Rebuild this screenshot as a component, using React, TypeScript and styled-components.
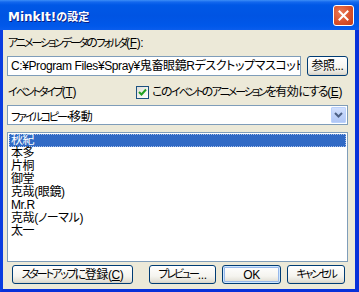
import React from "react";
import styled, { createGlobalStyle } from "styled-components";

const Global = createGlobalStyle`
  html, body { margin: 0; padding: 0; overflow: hidden; }
  body { font-family: "Liberation Sans", "Noto Sans CJK JP", sans-serif; }
`;

const Window = styled.div`
  width: 359px;
  height: 292px;
  display: flex;
  flex-direction: column;
  background: #0831d9;
`;

const TitleBar = styled.div`
  height: 30px;
  flex: none;
  display: flex;
  align-items: center;
  justify-content: space-between;
  padding: 0 5px 0 8px;
  background: linear-gradient(
    to bottom,
    #3d8ef7 0px,
    #1468ee 2px,
    #0058e6 5px,
    #0054e3 16px,
    #0058ea 26px,
    #0a5ded 30px
  );
`;

const Title = styled.span`
  font-family: "DejaVu Sans", "Noto Sans CJK JP", sans-serif;
  font-weight: bold;
  font-size: 12px;
  color: #fff;
  text-shadow: 1px 1px 0 #0a1e84;
  margin-top: 1px;
`;

const TitleJa = styled.span`
  font-family: "Noto Sans CJK JP", sans-serif;
  font-size: 11px;
`;

const CloseButton = styled.div`
  width: 19px;
  height: 19px;
  border: 1px solid #fff;
  border-radius: 3px;
  background: radial-gradient(circle at 35% 35%, #ea7a57 0%, #d9512c 55%, #c23b17 100%);
  display: flex;
  align-items: center;
  justify-content: center;
`;

const Frame = styled.div`
  flex: 1;
  display: flex;
  border-left: 3px solid #0a3ce0;
  border-right: 4px solid #0831d9;
  border-bottom: 3px solid #0831d9;
  min-height: 0;
`;

const Client = styled.div`
  flex: 1;
  min-width: 0;
  background: #ece9d8;
  padding: 7px 7px 0 4px;
  display: flex;
  flex-direction: column;
  font-family: "Liberation Sans", "Noto Sans CJK JP", sans-serif;
  font-size: 12px;
  letter-spacing: -0.4px;
  font-feature-settings: "palt";
  color: #000;
`;

const Kana = styled.span`
  font-size: 11px;
  letter-spacing: -2.1px;
`;

const Hira = styled.span`
  letter-spacing: -1.5px;
`;

function J({ t }: { t: string }) {
  const parts = t.split(/([\u30A0-\u30FF]+|[\u3040-\u309F]+)/);
  return (
    <>
      {parts.map((p, i) => {
        if (!p) return null;
        if (/^[\u30A0-\u30FF]+$/.test(p)) return <Kana key={i}>{p}</Kana>;
        if (/^[\u3040-\u309F]+$/.test(p)) return <Hira key={i}>{p}</Hira>;
        return <React.Fragment key={i}>{p}</React.Fragment>;
      })}
    </>
  );
}

const Label = styled.div`
  height: 13px;
  line-height: 13px;
  padding-left: 1px;
  white-space: nowrap;
`;

const Row = styled.div<{ $mt: number; $h: number }>`
  display: flex;
  align-items: center;
  gap: 6px;
  margin-top: ${(p) => p.$mt}px;
  height: ${(p) => p.$h}px;
  flex: none;
`;

const TextBox = styled.div`
  flex: 1;
  min-width: 0;
  height: 100%;
  box-sizing: border-box;
  border: 1px solid #7f9db9;
  background: #fff;
  padding: 0 3px;
  line-height: 18px;
  white-space: nowrap;
  overflow: hidden;
`;

const Button = styled.div<{ $w: number; $default?: boolean }>`
  width: ${(p) => p.$w}px;
  height: 100%;
  flex: none;
  box-sizing: border-box;
  border: 1px solid #003c74;
  border-radius: 3px;
  background: linear-gradient(to bottom, #ffffff 0%, #f5f4ef 60%, #e3e0d6 90%, #d6d0c5 100%);
  box-shadow: ${(p) =>
    p.$default ? "inset 0 0 0 1px #cee7ff, inset 0 0 0 2px #98b8ea" : "none"};
  display: flex;
  align-items: center;
  justify-content: center;
  white-space: nowrap;
  line-height: 1;
`;

const EventLabel = styled.div`
  width: 122px;
  flex: none;
  padding-left: 1px;
  line-height: 13px;
  white-space: nowrap;
`;

const CheckGroup = styled.div`
  display: flex;
  align-items: center;
  gap: 3px;
`;

const CheckBox = styled.div`
  width: 13px;
  height: 13px;
  box-sizing: border-box;
  border: 1px solid #1c5180;
  background: linear-gradient(135deg, #dcdcd7 0%, #f4f4f0 60%, #ffffff 100%);
  display: flex;
  align-items: center;
  justify-content: center;
  flex: none;
`;

const CheckText = styled.span`
  line-height: 13px;
  white-space: nowrap;
`;

const Combo = styled.div`
  flex: 1;
  height: 100%;
  box-sizing: border-box;
  border: 1px solid #7f9db9;
  background: #fff;
  display: flex;
  align-items: center;
  padding: 1px;
`;

const ComboText = styled.span`
  flex: 1;
  padding-left: 2px;
  white-space: nowrap;
`;

const DropButton = styled.div`
  width: 15px;
  height: 16px;
  box-sizing: border-box;
  border: 1px solid #bad1fc;
  border-radius: 1px;
  background: linear-gradient(to bottom, #d2e0fd 0%, #bfd2f9 50%, #b0c6f5 100%);
  display: flex;
  align-items: center;
  justify-content: center;
  flex: none;
`;

const ListBox = styled.div`
  margin-top: 7px;
  height: 130px;
  flex: none;
  box-sizing: border-box;
  border: 1px solid #7f9db9;
  background: #fff;
  padding: 1px;
  display: flex;
  flex-direction: column;
`;

const Item = styled.div<{ $selected?: boolean }>`
  height: 13px;
  line-height: 13px;
  padding-left: 2px;
  box-sizing: border-box;
  white-space: nowrap;
  background: ${(p) => (p.$selected ? "#316ac5" : "transparent")};
  color: ${(p) => (p.$selected ? "#fff" : "#000")};
  outline: ${(p) => (p.$selected ? "1px dotted #a6bde6" : "none")};
  outline-offset: -1px;
`;

const ButtonRow = styled.div`
  display: flex;
  height: 19px;
  margin-top: 3px;
  padding-left: 5px;
  gap: 6px;
  flex: none;
`;

const Spacer = styled.div`
  width: 4px;
  flex: none;
`;

const Fill = styled.div`
  flex: 1;
`;

const items = ["秋紀", "本多", "片桐", "御堂", "克哉(眼鏡)", "Mr.R", "克哉(ノーマル)", "太一"];

export default function App() {
  return (
    <>
      <Global />
      <Window>
        <TitleBar>
          <Title>
            MinkIt!<TitleJa>の設定</TitleJa>
          </Title>
          <CloseButton>
            <svg width="11" height="11" viewBox="0 0 11 11">
              <path d="M1.5 1.5 L9.5 9.5 M9.5 1.5 L1.5 9.5" stroke="#fff" strokeWidth="2" strokeLinecap="square" />
            </svg>
          </CloseButton>
        </TitleBar>
        <Frame>
          <Client>
            <Label>
              <J t="アニメーションデータのフォルダ(" />
              <u>F</u>):
            </Label>
            <Row $mt={6} $h={20}>
              <TextBox>C:¥Program Files¥Spray¥鬼畜眼鏡Rデスクトップマスコット¥animation</TextBox>
              <Button $w={41}>参照...</Button>
            </Row>
            <Row $mt={10} $h={13}>
              <EventLabel>
                <J t="イベントタイプ(" />
                <u>T</u>)
              </EventLabel>
              <CheckGroup>
                <CheckBox>
                  <svg width="9" height="9" viewBox="0 0 9 9">
                    <path d="M1 4 L3.5 6.5 L8 1.5" stroke="#21a121" strokeWidth="2" fill="none" />
                  </svg>
                </CheckBox>
                <CheckText>
                  <J t="このイベントのアニメーションを有効にする(" />
                  <u>E</u>)
                </CheckText>
              </CheckGroup>
            </Row>
            <Row $mt={6} $h={20}>
              <Combo>
                <ComboText>
                  <J t="ファイルコピー・移動" />
                </ComboText>
                <DropButton>
                  <svg width="9" height="6" viewBox="0 0 9 6">
                    <path d="M1 1 L4.5 4.5 L8 1" stroke="#4d6185" strokeWidth="2" fill="none" />
                  </svg>
                </DropButton>
              </Combo>
            </Row>
            <ListBox>
              {items.map((t, i) => (
                <Item key={t} $selected={i === 0}>
                  {t}
                </Item>
              ))}
            </ListBox>
            <ButtonRow>
              <Button $w={121}>
                <J t="スタートアップに登録(" />
                <u>C</u>)
              </Button>
              <Spacer />
              <Button $w={67}>
                <J t="プレビュー..." />
              </Button>
              <Button $w={59} $default>
                OK
              </Button>
              <Button $w={58}>
                <J t="キャンセル" />
              </Button>
            </ButtonRow>
            <Fill />
          </Client>
        </Frame>
      </Window>
    </>
  );
}
